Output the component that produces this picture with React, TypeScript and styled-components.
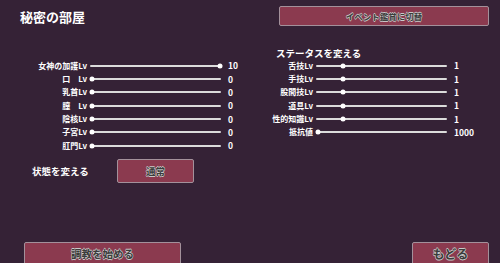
import styled, { createGlobalStyle } from 'styled-components';

const GlobalStyle = createGlobalStyle`
    html, body {
        margin: 0;
        padding: 0;
        background-color: #352236;
    }
    * {
        box-sizing: border-box;
    }
`;

const Screen = styled.div`
    width: 500px;
    height: 263px;
    overflow: hidden;
    display: flex;
    flex-direction: column;
    background-color: #352236;
    color: #ffffff;
    font-family: "Noto Sans CJK JP", "Noto Sans", sans-serif;
    font-weight: 700;
`;

const Header = styled.header`
    display: flex;
    align-items: center;
    justify-content: space-between;
    height: 20px;
    margin-top: 6px;
    padding: 0 11px 0 20px;
`;

const Title = styled.h1`
    margin: 0;
    font-size: 13px;
    font-weight: 700;
    line-height: 1;
`;

// dark text with a thin light rim, like the game's button labels
const Button = styled.button<{w: number; h: number; size: number}>`
    width: ${props => props.w}px;
    height: ${props => props.h}px;
    flex-shrink: 0;
    padding: 0;
    background-color: #8b3a4f;
    border: 1px solid #a3919b;
    border-radius: 2px;
    color: #3c3c3c;
    font-family: "Noto Sans CJK JP", sans-serif;
    font-weight: 700;
    font-size: ${props => props.size}px;
    line-height: 1;
    text-shadow: 0.6px 0 0 #c9c9c9, -0.6px 0 0 #c9c9c9, 0 0.6px 0 #c9c9c9, 0 -0.6px 0 #c9c9c9;
    cursor: pointer;
`;

const Main = styled.main`
    display: flex;
    margin-top: 21px;
`;

const Panel = styled.section<{w?: number; top?: number}>`
    width: ${props => props.w ? props.w + "px" : "auto"};
    padding-top: ${props => props.top || 0}px;
    display: flex;
    flex-direction: column;
`;

const Heading = styled.h2`
    margin: 0 0 0 12px;
    height: 12px;
    font-size: 9.5px;
    font-weight: 700;
    line-height: 12px;
`;

const Row = styled.div<{labelW: number}>`
    display: grid;
    grid-template-columns: ${props => props.labelW}px 131px auto;
    column-gap: 3px;
    align-items: center;
    height: 13.33px;
    font-size: 8px;
    line-height: 1;
`;

const Label = styled.span`
    justify-self: end;
    white-space: pre;
`;

const Track = styled.div`
    position: relative;
    height: 2px;
    background-color: #dcdcdc;
    border-radius: 1px;
`;

const Knob = styled.span`
    position: absolute;
    top: 50%;
    width: 5px;
    height: 5px;
    border-radius: 50%;
    background-color: #ffffff;
    transform: translate(-50%, -50%);
`;

const Value = styled.span`
    margin-left: 4px;
    font-size: 8.5px;
`;

const StateRow = styled.div`
    display: flex;
    align-items: center;
    margin-top: 7px;
    padding-left: 32px;
`;

const StateLabel = styled.span`
    width: 85px;
    font-size: 9.5px;
`;

const Footer = styled.footer`
    display: flex;
    justify-content: space-between;
    margin-top: auto;
    padding: 0 11px 0 24px;
    height: 21px;
    overflow: visible;
`;

type SliderData = {
    label: string;
    value: number;
    max: number;
};

const leftSliders: SliderData[] = [
    { label: "女神の加護Lv", value: 10, max: 10 },
    { label: "口　Lv", value: 0, max: 10 },
    { label: "乳首Lv", value: 0, max: 10 },
    { label: "膣　Lv", value: 0, max: 10 },
    { label: "陰核Lv", value: 0, max: 10 },
    { label: "子宮Lv", value: 0, max: 10 },
    { label: "肛門Lv", value: 0, max: 10 },
];

const rightSliders: SliderData[] = [
    { label: "舌技Lv", value: 1, max: 5 },
    { label: "手技Lv", value: 1, max: 5 },
    { label: "股間技Lv", value: 1, max: 5 },
    { label: "道具Lv", value: 1, max: 5 },
    { label: "性的知識Lv", value: 1, max: 5 },
    { label: "抵抗値", value: 0, max: 1000 },
];

const rightDisplay = ["1", "1", "1", "1", "1", "1000"];

const Slider = (props: {data: SliderData; labelW: number; shown?: string}) => {
    const pct = Math.min(100, (props.data.value / props.data.max) * 100);
    const left = 1.5 + (pct / 100) * 128;
    return (
        <Row labelW={props.labelW}>
            <Label>{props.data.label}</Label>
            <Track>
                <Knob style={{ left: left + "px" }} />
            </Track>
            <Value>{props.shown ?? props.data.value}</Value>
        </Row>
    );
};

const App = () => {
    return (
        <Screen>
            <GlobalStyle />
            <Header>
                <Title>秘密の部屋</Title>
                <Button w={210} h={20} size={8.5}>イベント鑑賞に切替</Button>
            </Header>
            <Main>
                <Panel w={264} top={12}>
                    {leftSliders.map((s, i) => <Slider key={i} data={s} labelW={87} />)}
                </Panel>
                <Panel>
                    <Heading>ステータスを変える</Heading>
                    {rightSliders.map((s, i) => <Slider key={i} data={s} labelW={49} shown={rightDisplay[i]} />)}
                </Panel>
            </Main>
            <StateRow>
                <StateLabel>状態を変える</StateLabel>
                <Button w={77} h={24} size={9.5}>通常</Button>
            </StateRow>
            <Footer>
                <Button w={157} h={24} size={10.5}>調教を始める</Button>
                <Button w={77} h={24} size={12}>もどる</Button>
            </Footer>
        </Screen>
    );
};

export default App;
